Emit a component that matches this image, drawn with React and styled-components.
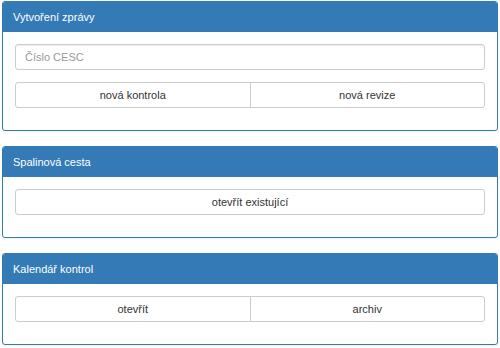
import React from 'react';
import styled, { createGlobalStyle } from 'styled-components';

const GlobalStyles = createGlobalStyle`
  * {
    box-sizing: border-box;
  }
  body {
    margin: 0;
    background: #fff;
    font-family: 'Liberation Sans', Arial, sans-serif;
    font-size: 11px;
    color: #333;
  }
`;

const Page = styled.div`
  padding: 1px 2px 0 2px;
  width: 500px;
`;

const Panel = styled.section`
  background: #fff;
  border: 1px solid #337ab7;
  border-radius: 3px;
  margin-bottom: 15px;
  box-shadow: 0 1px 1px rgba(0, 0, 0, 0.05);
  overflow: hidden;
`;

const PanelHeading = styled.div`
  display: flex;
  align-items: center;
  height: 30px;
  padding: 0 10px;
  background: #337ab7;
  color: #fff;
  font-size: 11px;
`;

const PanelBody = styled.div`
  display: flex;
  flex-direction: column;
  gap: 12px;
  padding: 12px 12px 22px;
`;

const Input = styled.input`
  height: 26px;
  width: 100%;
  padding: 0 9px;
  border: 1px solid #ccc;
  border-radius: 3px;
  font-family: inherit;
  font-size: 11px;
  color: #555;
  box-shadow: inset 0 1px 1px rgba(0, 0, 0, 0.075);
  &::placeholder {
    color: #999;
  }
`;

const ButtonGroup = styled.div`
  display: flex;
`;

const Button = styled.button`
  flex: 1;
  height: 26px;
  padding: 0 10px;
  background: #fff;
  border: 1px solid #ccc;
  border-radius: 3px;
  font-family: inherit;
  font-size: 11px;
  color: #333;
  cursor: pointer;

  ${ButtonGroup} > & + & {
    margin-left: -1px;
  }
  ${ButtonGroup} > &:not(:last-child) {
    border-top-right-radius: 0;
    border-bottom-right-radius: 0;
  }
  ${ButtonGroup} > &:not(:first-child) {
    border-top-left-radius: 0;
    border-bottom-left-radius: 0;
  }
`;

const App = () => (
  <>
    <GlobalStyles />
    <Page>
      <Panel>
        <PanelHeading>Vytvoření zprávy</PanelHeading>
        <PanelBody>
          <Input type="text" placeholder="Číslo CESC" />
          <ButtonGroup>
            <Button>nová kontrola</Button>
            <Button>nová revize</Button>
          </ButtonGroup>
        </PanelBody>
      </Panel>
      <Panel>
        <PanelHeading>Spalinová cesta</PanelHeading>
        <PanelBody>
          <ButtonGroup>
            <Button>otevřít existující</Button>
          </ButtonGroup>
        </PanelBody>
      </Panel>
      <Panel>
        <PanelHeading>Kalendář kontrol</PanelHeading>
        <PanelBody>
          <ButtonGroup>
            <Button>otevřít</Button>
            <Button>archiv</Button>
          </ButtonGroup>
        </PanelBody>
      </Panel>
    </Page>
  </>
);

export default App;
